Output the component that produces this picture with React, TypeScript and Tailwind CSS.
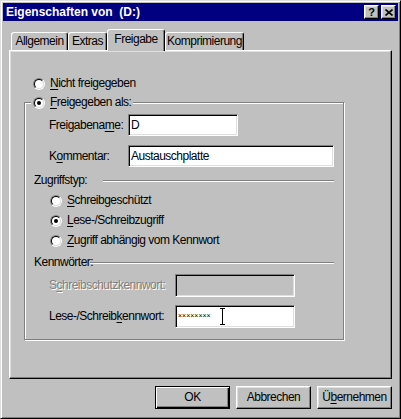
import React from 'react'

const raised = 'border border-t-white border-l-white border-r-black border-b-black shadow-[inset_-1px_-1px_0_#808080,inset_1px_1px_0_#dfdfdf]'
const sunken = 'border border-t-[#808080] border-l-[#808080] border-r-white border-b-white shadow-[inset_1px_1px_0_#000,inset_-1px_-1px_0_#dfdfdf]'
const etched = 'h-[2px] border-t border-t-[#808080] border-b border-b-white'

const Radio = ({ checked }: { checked?: boolean }) => (
    <span className="flex w-[12px] h-[12px] shrink-0 rounded-full border border-t-[#808080] border-l-[#808080] border-r-white border-b-white">
        <span className="flex flex-1 items-center justify-center rounded-full border border-t-black border-l-black border-r-[#dfdfdf] border-b-[#dfdfdf] bg-white">
            {checked && <span className="w-[4px] h-[4px] rounded-full bg-black" />}
        </span>
    </span>
)

const RadioRow = ({ checked, children }: { checked?: boolean; children: React.ReactNode }) => (
    <div className="flex h-[15px] items-center gap-[5px]">
        <Radio checked={checked} />
        <span>{children}</span>
    </div>
)

const U = ({ children }: { children: React.ReactNode }) => (
    <span className="underline underline-offset-[2px]">{children}</span>
)

const App = () => {
    return (
        <div
            className="w-[401px] h-[419px] bg-[#c0c0c0] border border-t-[#dfdfdf] border-l-[#dfdfdf] border-r-black border-b-black shadow-[inset_1px_1px_0_#fff,inset_-1px_-1px_0_#808080] p-[2px] flex flex-col text-[12px] tracking-[-0.5px] leading-[15px] text-black"
            style={{ fontFamily: '"Liberation Sans", Arial, sans-serif' }}
        >
            {/* title bar */}
            <div className="h-[18px] bg-[#000080] flex items-center pl-[3px] pr-[2px]">
                <span className="flex-1 text-white font-bold text-[12px] tracking-normal whitespace-pre">
                    Eigenschaften von  (D:)
                </span>
                <div className="flex gap-[2px]">
                    <div className={`w-[15px] h-[14px] bg-[#c0c0c0] flex items-center justify-center text-[11px] font-bold leading-none tracking-normal ${raised}`}>
                        ?
                    </div>
                    <div className={`w-[15px] h-[14px] bg-[#c0c0c0] flex items-center justify-center ${raised}`}>
                        <svg width="8" height="7" viewBox="0 0 8 7">
                            <path d="M0.5 0.5L7.5 6.5M7.5 0.5L0.5 6.5" stroke="#000" strokeWidth="1.6" />
                        </svg>
                    </div>
                </div>
            </div>

            <div className="flex flex-col px-[6px]">
                {/* tabs */}
                <div className="flex items-end h-[21px] mt-[8px] pl-[2px]">
                    <div className="w-[57px] h-[18px] flex items-center justify-center rounded-t-[3px] border-l border-t border-white border-r border-r-black shadow-[inset_-1px_0_0_#808080]">
                        Allgemein
                    </div>
                    <div className="w-[39px] h-[18px] flex items-center justify-center rounded-t-[3px] border-l border-t border-white border-r border-r-black shadow-[inset_-1px_0_0_#808080]">
                        Extras
                    </div>
                    <div className="relative z-10 w-[58px] h-[22px] -mb-[1px] pb-[3px] bg-[#c0c0c0] flex items-center justify-center rounded-t-[3px] border-l border-t border-white border-r border-r-black shadow-[inset_-1px_0_0_#808080]">
                        Freigabe
                    </div>
                    <div className="w-[79px] h-[18px] flex items-center justify-center rounded-t-[3px] border-l border-t border-white border-r border-r-black shadow-[inset_-1px_0_0_#808080]">
                        Komprimierung
                    </div>
                </div>

                {/* tab panel */}
                <div className="h-[329px] border border-t-white border-l-white border-r-black border-b-black shadow-[inset_-1px_-1px_0_#808080,inset_1px_1px_0_#dfdfdf] flex flex-col">
                    <div className="ml-[23px] mt-[25px]">
                        <RadioRow>
                            <U>N</U>icht freigegeben
                        </RadioRow>
                    </div>

                    {/* group box */}
                    <div className="ml-[14px] mt-[11px] w-[320px] border border-[#808080] shadow-[1px_1px_0_#fff,inset_1px_1px_0_#fff] flex flex-col pb-[11px]">
                        <div className="self-start -mt-[8px] ml-[6px] px-[2px] bg-[#c0c0c0]">
                            <RadioRow checked>
                                <U>F</U>reigegeben als:
                            </RadioRow>
                        </div>

                        <div className="mt-[4px] h-[22px] flex items-center pl-[24px]">
                            <span className="w-[79px]">
                                Freigabena<U>m</U>e:
                            </span>
                            <div className={`w-[110px] h-[22px] bg-white flex items-center pl-[2px] ${sunken}`}>D</div>
                        </div>
                        <div className="mt-[9px] h-[22px] flex items-center pl-[24px]">
                            <span className="w-[79px]">
                                K<U>o</U>mmentar:
                            </span>
                            <div className={`w-[206px] h-[22px] bg-white flex items-center pl-[2px] ${sunken}`}>Austauschplatte</div>
                        </div>

                        <div className="mt-[6px] h-[15px] flex items-center pl-[9px] pr-[9px]">
                            <span className="w-[69px]">Zugriffstyp:</span>
                            <div className={`flex-1 ${etched}`} />
                        </div>
                        <div className="mt-[5px] pl-[25px] flex flex-col gap-[5px]">
                            <RadioRow>
                                <U>S</U>chreibgeschützt
                            </RadioRow>
                            <RadioRow checked>
                                <U>L</U>ese-/Schreibzugriff
                            </RadioRow>
                            <RadioRow>
                                <U>Z</U>ugriff abhängig vom Kennwort
                            </RadioRow>
                        </div>

                        <div className="mt-[7px] h-[15px] flex items-center pl-[9px] pr-[9px]">
                            <span className="w-[56px]">Kennwörter:</span>
                            <div className={`flex-1 ${etched}`} />
                        </div>
                        <div className="mt-[4px] h-[23px] flex items-center pl-[24px]">
                            <span className="w-[126px] text-[#808080] [text-shadow:1px_1px_0_#fff]">
                                S<U>c</U>hreibschutzkennwort:
                            </span>
                            <div className={`w-[120px] h-[23px] bg-[#c0c0c0] ${sunken}`} />
                        </div>
                        <div className="mt-[8px] h-[23px] flex items-center pl-[24px]">
                            <span className="w-[126px]">
                                Lese-/Schreib<U>k</U>ennwort:
                            </span>
                            <div className={`relative w-[120px] h-[23px] bg-white pl-[2px] pt-[1px] ${sunken}`}>
                                <span className="text-[7px] leading-[10px] tracking-[0px]">××××××××</span>
                                <svg className="absolute left-[43px] top-[2px]" width="7" height="17" viewBox="0 0 7 17">
                                    <path d="M1 0.5H6M3.5 1V16M1 16.5H6" stroke="#000" strokeWidth="1" fill="none" />
                                </svg>
                            </div>
                        </div>
                    </div>
                </div>

                {/* buttons */}
                <div className="mt-[7px] flex justify-end gap-[6px]">
                    <button className="w-[75px] h-[23px] bg-[#c0c0c0] border border-black shadow-[inset_1px_1px_0_#fff,inset_-1px_-1px_0_#000,inset_-2px_-2px_0_#808080]">
                        OK
                    </button>
                    <button className={`w-[75px] h-[23px] bg-[#c0c0c0] ${raised}`}>Abbrechen</button>
                    <button className={`w-[75px] h-[23px] bg-[#c0c0c0] ${raised}`}>
                        Ü<U>b</U>ernehmen
                    </button>
                </div>
            </div>
        </div>
    )
}

export default App
